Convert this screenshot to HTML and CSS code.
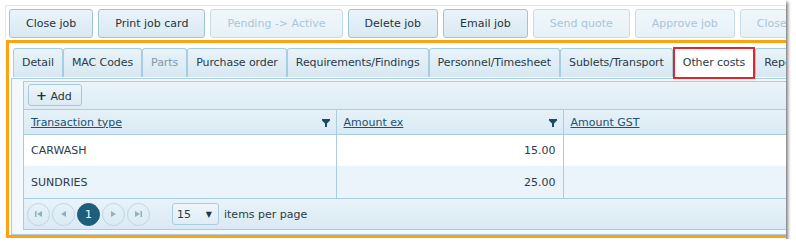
FILE: index.html
```html
<!DOCTYPE html>
<html lang="en">
<head>
    <meta charset="UTF-8">
    <title>Job - Other costs</title>
    <link rel="stylesheet" href="styles.css">
</head>
<body>
    <div class="frame">
        <div class="shell">
            <div class="actions">
                <button class="btn">Close job</button>
                <button class="btn">Print job card</button>
                <button class="btn" disabled>Pending -&gt; Active</button>
                <button class="btn">Delete job</button>
                <button class="btn">Email job</button>
                <button class="btn" disabled>Send quote</button>
                <button class="btn" disabled>Approve job</button>
                <button class="btn" disabled>Closed</button>
            </div>
            <div class="job-panel">
                <ul class="tabs">
                    <li class="tab">Detail</li>
                    <li class="tab">MAC Codes</li>
                    <li class="tab off">Parts</li>
                    <li class="tab">Purchase order</li>
                    <li class="tab">Requirements/Findings</li>
                    <li class="tab">Personnel/Timesheet</li>
                    <li class="tab">Sublets/Transport</li>
                    <li class="tab current">Other costs</li>
                    <li class="tab">Reports</li>
                </ul>
                <div class="tab-panel">
                    <div class="grid">
                        <div class="grid-toolbar">
                            <button class="btn-add"><span class="plus">+</span> Add</button>
                        </div>
                        <table class="grid-table">
                            <colgroup>
                                <col class="c1">
                                <col class="c2">
                                <col>
                            </colgroup>
                            <thead>
                                <tr>
                                    <th><a href="#">Transaction type</a><svg class="filter" width="8" height="8" viewBox="0 0 8 8"><polygon points="0,0 8,0 8,1.5 5,4.5 5,8 3,8 3,4.5 0,1.5"/></svg></th>
                                    <th><a href="#">Amount ex</a><svg class="filter" width="8" height="8" viewBox="0 0 8 8"><polygon points="0,0 8,0 8,1.5 5,4.5 5,8 3,8 3,4.5 0,1.5"/></svg></th>
                                    <th><a href="#">Amount GST</a></th>
                                </tr>
                            </thead>
                            <tbody>
                                <tr>
                                    <td>CARWASH</td>
                                    <td class="num">15.00</td>
                                    <td></td>
                                </tr>
                                <tr class="alt">
                                    <td>SUNDRIES</td>
                                    <td class="num">25.00</td>
                                    <td></td>
                                </tr>
                            </tbody>
                        </table>
                        <div class="pager">
                            <span class="pg"><svg width="7" height="6" viewBox="0 0 7 6"><rect x="0" y="0" width="1.5" height="6"/><polygon points="7,0 7,6 2,3"/></svg></span>
                            <span class="pg"><svg width="5" height="6" viewBox="0 0 5 6"><polygon points="5,0 5,6 0,3"/></svg></span>
                            <span class="pg on">1</span>
                            <span class="pg"><svg width="5" height="6" viewBox="0 0 5 6"><polygon points="0,0 0,6 5,3"/></svg></span>
                            <span class="pg"><svg width="7" height="6" viewBox="0 0 7 6"><polygon points="0,0 0,6 5,3"/><rect x="5.5" y="0" width="1.5" height="6"/></svg></span>
                            <span class="page-size">15<span class="caret">&#9660;</span></span>
                            <span class="per-page">items per page</span>
                        </div>
                    </div>
                </div>
            </div>
        </div>
    </div>
</body>
</html>
```

FILE: styles.css
```css
body {
    margin: 0;
    background-color: #fff;
    font-family: "DejaVu Sans", Verdana, sans-serif;
    font-size: 11px;
    color: #2b3b48;
}
.frame {
    width: 786px;
    height: 239px;
    overflow: hidden;
    background-color: #fff;
    box-shadow: 2px 2px 3px rgba(0, 0, 0, 0.5);
}
.shell {
    padding: 5px 0 0 5px;
}
.actions {
    display: flex;
    gap: 5px;
    padding: 3px 0 0 3px;
    border-top: 1px solid #dbe8f0;
    border-left: 1px solid #dbe8f0;
    white-space: nowrap;
}
.btn {
    flex: none;
    height: 29px;
    padding: 0 16px;
    border: 1px solid #9fc4d8;
    border-radius: 3px;
    background: linear-gradient(#eaf3f9, #d9e9f3);
    font: inherit;
    color: #25343f;
}
.btn:disabled {
    color: #a9c6d7;
    border-color: #c6deea;
    background: linear-gradient(#f0f7fb, #e6f1f7);
}
.job-panel {
    width: 1000px;
    height: 192px;
    margin: 2px 0 0 1px;
    border: 3px solid #ffa20f;
}
.tabs {
    display: flex;
    list-style: none;
    margin: 0;
    padding: 5px 0 0 4px;
    white-space: nowrap;
}
.tab {
    flex: none;
    height: 28px;
    line-height: 28px;
    padding: 0 8px;
    border: 1px solid #a9cde0;
    border-bottom: none;
    border-radius: 3px 3px 0 0;
    background: linear-gradient(#e9f3f9, #d7e8f2);
    color: #2b3b48;
    letter-spacing: -0.08px;
}
.tab.off {
    color: #7f9aab;
}
.tab.current {
    background: #fff;
    border: 1px solid #e2262d;
    border-radius: 0;
    height: 28px;
    margin: 0 1px;
    box-shadow: 0 0 0 1px #e2262d;
}
.tab-panel {
    margin: 0 2px 1px 2px;
    padding: 2px 0 4px 11px;
    border: 1px solid #a9cde0;
    background-color: #f2f8fb;
}
.grid {
    width: 900px;
    border: 1px solid #a8cde0;
    background-color: #fff;
}
.grid-toolbar {
    padding: 2px 4px 3px;
    border-bottom: 1px solid #a8cde0;
    background: linear-gradient(#eaf4f9, #ddecf5);
}
.btn-add {
    height: 22px;
    padding: 0 9px 0 7px;
    border: 1px solid #a4c8dc;
    border-radius: 3px;
    background: linear-gradient(#eef6fa, #dbeaf3);
    font: inherit;
    color: #25343f;
}
.plus {
    font-weight: bold;
    font-size: 13px;
}
.grid-table {
    border-collapse: collapse;
    width: 100%;
    table-layout: fixed;
}
.c1 {
    width: 312px;
}
.c2 {
    width: 227px;
}
.grid-table th {
    height: 24px;
    padding: 0 6px 0 7px;
    text-align: left;
    font-weight: normal;
    background: linear-gradient(#e6f1f8, #d9eaf4);
    border-right: 1px solid #a8cde0;
    border-bottom: 1px solid #a8cde0;
}
.grid-table th a {
    color: #1f506e;
}
.filter {
    float: right;
    margin-top: 3px;
    fill: #1d4a63;
}
.grid-table td {
    height: 31px;
    padding: 0 7px;
    border-right: 1px solid #a8cde0;
}
.grid-table tr.alt td {
    height: 32px;
    background-color: #ebf4fa;
}
.grid-table td.num {
    text-align: right;
}
.pager {
    display: flex;
    align-items: center;
    height: 30px;
    padding: 0 3px;
    border-top: 1px solid #a8cde0;
    background: linear-gradient(#e9f3f9, #d9e9f3);
}
.pg {
    display: flex;
    align-items: center;
    justify-content: center;
    box-sizing: border-box;
    width: 23px;
    height: 23px;
    margin-right: 2px;
    border: 1px solid #bcd7e5;
    border-radius: 50%;
    fill: #8eb0c3;
}
.pg.on {
    background-color: #1f5d7c;
    border-color: #1f5d7c;
    color: #fff;
}
.page-size {
    display: flex;
    align-items: center;
    justify-content: space-between;
    box-sizing: border-box;
    width: 47px;
    height: 22px;
    margin-left: 20px;
    padding: 0 6px 0 4px;
    border: 1px solid #a8cde0;
    border-radius: 3px;
    background: linear-gradient(#eff6fa, #dfedf5);
}
.caret {
    font-size: 8px;
    color: #1d3a4c;
}
.per-page {
    margin-left: 5px;
}
```
